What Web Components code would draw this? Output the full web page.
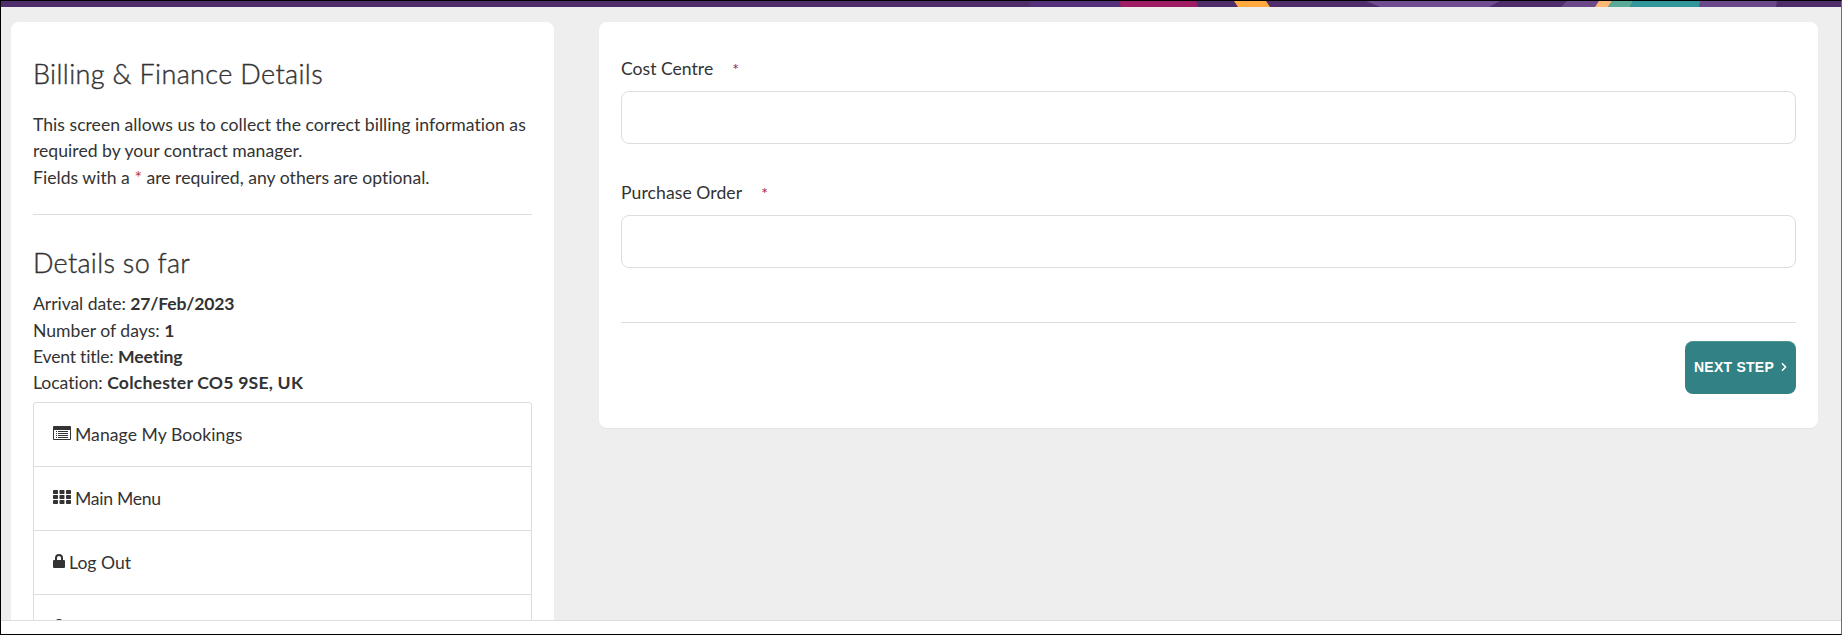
<!DOCTYPE html>
<html lang="en">
<head>
<meta charset="utf-8">
<title>Billing &amp; Finance Details</title>
<style>
    html, body {
        margin: 0;
        height: 100%;
    }
    body {
        font-family: Lato, sans-serif;
        font-size: 17.6px;
        font-variant-ligatures: none;
        line-height: 26.4px;
        color: #333;
        overflow: hidden;
    }
</style>
</head>
<body>
<booking-page>
    <page-banner slot="banner"></page-banner>
    <side-panel slot="side">
        <panel-title>Billing &amp; Finance Details</panel-title>
        <intro-text></intro-text>
        <panel-title class="second">Details so far</panel-title>
        <detail-row label="Arrival date:" style="--label: -.07px; --value: -.16px">27/Feb/2023</detail-row>
        <detail-row label="Number of days:">1</detail-row>
        <detail-row label="Event title:" style="--label: -.22px; --value: -.1px">Meeting</detail-row>
        <detail-row label="Location:" style="--label: -.05px; --value: .21px">Colchester CO5 9SE, UK</detail-row>
        <menu-list>
            <menu-item icon="list" style="letter-spacing: .05px">Manage My Bookings</menu-item>
            <menu-item icon="grid" style="letter-spacing: -.27px">Main Menu</menu-item>
            <menu-item icon="lock">Log Out</menu-item>
            <menu-item icon="lock" class="last"></menu-item>
        </menu-list>
    </side-panel>
    <form-panel slot="main">
        <form-field>Cost Centre</form-field>
        <form-field style="letter-spacing: .07px">Purchase Order</form-field>
        <next-button slot="action">NEXT STEP</next-button>
    </form-panel>
</booking-page>

<script>
const ICONS = {
    list: `<svg width="18" height="14" viewBox="0 0 18 14"><path fill="#333" fill-rule="evenodd" d="M1 0h16a1 1 0 0 1 1 1v12a1 1 0 0 1-1 1H1a1 1 0 0 1-1-1V1a1 1 0 0 1 1-1zM1 4v9h16V4zM3 5h1v1H3zM5 5h10v1H5zM3 7h1v1H3zM5 7h10v1H5zM3 9h1v1H3zM5 9h10v1H5zM3 11h1v1H3zM5 11h10v1H5z"/></svg>`,
    grid: `<svg width="18" height="14" viewBox="0 0 18 14"><g fill="#333"><rect width="5" height="4" rx=".7"/><rect x="6.5" width="5" height="4" rx=".7"/><rect x="13" width="5" height="4" rx=".7"/><rect y="5" width="5" height="4" rx=".7"/><rect x="6.5" y="5" width="5" height="4" rx=".7"/><rect x="13" y="5" width="5" height="4" rx=".7"/><rect y="10" width="5" height="4" rx=".7"/><rect x="6.5" y="10" width="5" height="4" rx=".7"/><rect x="13" y="10" width="5" height="4" rx=".7"/></g></svg>`,
    lock: `<svg width="12" height="14" viewBox="0 0 12 14"><path fill="#333" fill-rule="evenodd" d="M1 6h1V4a4 4 0 0 1 8 0v2h1a1 1 0 0 1 1 1v6a1 1 0 0 1-1 1H1a1 1 0 0 1-1-1V7a1 1 0 0 1 1-1zM4 6h4V4a2 2 0 0 0-4 0z"/></svg>`
};

class BaseElement extends HTMLElement {
    constructor() {
        super();
        this.shadow = this.attachShadow({mode: "open"});
    }

    connectedCallback() {
        this.shadow.innerHTML = this.render();
    }
}

class BookingPage extends BaseElement {
    render() {
        return `
            <style>
                :host {
                    display: flex;
                    flex-direction: column;
                    box-sizing: border-box;
                    height: 635px;
                    border: 1px solid #000;
                    border-right-color: #6e6e6e;
                    background: #eee;
                }
                .columns {
                    flex: 1;
                    min-height: 0;
                    overflow: hidden;
                    display: grid;
                    grid-template-columns: 543px 1219px;
                    column-gap: 45px;
                    align-items: start;
                    padding: 15px 0 0 10px;
                }
                .footer {
                    height: 13px;
                    background: #fff;
                    border-top: 1px solid #ddd;
                }
            </style>
            <slot name="banner"></slot>
            <div class="columns">
                <slot name="side"></slot>
                <slot name="main"></slot>
            </div>
            <div class="footer"></div>
        `;
    }
}

class PageBanner extends BaseElement {
    render() {
        return `
            <style>
                :host { display: block; height: 6px; background: #4f2d6b; }
                svg { display: block; }
            </style>
            <svg width="1840" height="6" viewBox="1 1 1840 6">
                <path fill="#54307a" d="M1030 1h90v6h-90z"/>
                <path fill="#a01c62" d="M1119 1h77l2 6h-77z"/>
                <path fill="#ffa93f" d="M1234 1h32l4 6h-32z"/>
                <path fill="#704d90" d="M1366 1h134l-11 6h-109z"/>
                <path fill="#6a4889" d="M1567 1h210l-1 6h-215z"/>
                <path fill="#ffb972" d="M1599 1h13l-4 6h-13z"/>
                <path fill="#5aaa98" d="M1612 1h21l-3 6h-22z"/>
                <path fill="#31979b" d="M1633 1h67l-1 6h-69z"/>
            </svg>
        `;
    }
}

class SidePanel extends BaseElement {
    render() {
        return `
            <style>
                :host {
                    display: block;
                    background: #fff;
                    border-radius: 8px;
                    padding: 34px 22px 22px;
                }
            </style>
            <slot></slot>
        `;
    }
}

class PanelTitle extends BaseElement {
    render() {
        return `
            <style>
                :host {
                    display: block;
                    font-size: 27px;
                    font-weight: 300;
                    line-height: 36px;
                    letter-spacing: .37px;
                    -webkit-text-stroke: .4px #333;
                }
                :host(.second) { margin-top: 30px; margin-bottom: 10px; letter-spacing: .3px; }
            </style>
            <slot></slot>
        `;
    }
}

class IntroText extends BaseElement {
    render() {
        return `
            <style>
                :host { display: block; border-bottom: 1px solid #ddd; padding: 20px 0 23px; white-space: nowrap; }
                p { margin: 0; letter-spacing: .02px; }
                b { color: #c0392b; font-weight: normal; }
            </style>
            <p>This screen allows us to collect the correct billing information as</p>
            <p>required by your contract manager.</p>
            <p>Fields with a <b>*</b> are required, any others are optional.</p>
        `;
    }
}

class DetailRow extends BaseElement {
    render() {
        return `
            <style>
                :host { display: block; white-space: nowrap; }
                span { letter-spacing: var(--label, 0); }
                b { font-weight: 700; letter-spacing: var(--value, 0); }
            </style>
            <span>${this.getAttribute('label')}</span> <b><slot></slot></b>
        `;
    }
}

class MenuList extends BaseElement {
    render() {
        return `
            <style>
                :host {
                    display: block;
                    margin-top: 5px;
                    border: 1px solid #ddd;
                    border-radius: 3px;
                }
            </style>
            <slot></slot>
        `;
    }
}

class MenuItem extends BaseElement {
    render() {
        return `
            <style>
                :host {
                    display: flex;
                    align-items: center;
                    gap: 4px;
                    height: 63px;
                    padding-left: 19px;
                    border-bottom: 1px solid #ddd;
                }
                svg { display: block; margin-top: -2px; }
                span { padding-top: 1px; }
                :host(.last) svg { margin-top: 0; }
            </style>
            ${ICONS[this.getAttribute('icon')]}
            <span><slot></slot></span>
        `;
    }
}

class FormPanel extends BaseElement {
    render() {
        return `
            <style>
                :host {
                    display: block;
                    box-sizing: border-box;
                    height: 406px;
                    background: #fff;
                    border-radius: 8px;
                    padding: 34px 22px 0;
                    box-shadow: 0 1px 1px rgba(0, 0, 0, .04);
                }
                .actions {
                    display: flex;
                    justify-content: flex-end;
                    margin-top: 18px;
                    padding-top: 18px;
                    border-top: 1px solid #ddd;
                }
            </style>
            <slot></slot>
            <div class="actions"><slot name="action"></slot></div>
        `;
    }
}

class FormField extends BaseElement {
    render() {
        return `
            <style>
                :host { display: block; padding-bottom: 36px; }
                label { display: flex; height: 35px; gap: 19px; }
                .req { color: #a01c50; font-size: 16px; }
                input {
                    display: block;
                    box-sizing: border-box;
                    width: 100%;
                    height: 53px;
                    border: 1px solid #ddd;
                    border-radius: 8px;
                    background: #fff;
                }
            </style>
            <label for="value"><span><slot></slot></span><span class="req">*</span></label>
            <input id="value" type="text">
        `;
    }
}

class NextButton extends BaseElement {
    render() {
        return `
            <style>
                button {
                    display: flex;
                    align-items: center;
                    gap: 7px;
                    width: 111px;
                    height: 53px;
                    padding: 0 0 2px 9px;
                    border: 0;
                    border-top: 1px solid #4b9492;
                    border-radius: 8px;
                    background: #328285;
                    color: #fff;
                    font: bold 14px "Liberation Sans", sans-serif;
                    letter-spacing: .25px;
                    white-space: nowrap;
                }
            </style>
            <button><span><slot></slot></span><svg width="6" height="10" viewBox="0 0 6 10"><path d="M1 1.2L4.6 5 1 8.8" fill="none" stroke="#fff" stroke-width="1.5"/></svg></button>
        `;
    }
}

customElements.define('booking-page', BookingPage)
customElements.define('page-banner', PageBanner)
customElements.define('side-panel', SidePanel)
customElements.define('panel-title', PanelTitle)
customElements.define('intro-text', IntroText)
customElements.define('detail-row', DetailRow)
customElements.define('menu-list', MenuList)
customElements.define('menu-item', MenuItem)
customElements.define('form-panel', FormPanel)
customElements.define('form-field', FormField)
customElements.define('next-button', NextButton)
</script>
</body>
</html>
